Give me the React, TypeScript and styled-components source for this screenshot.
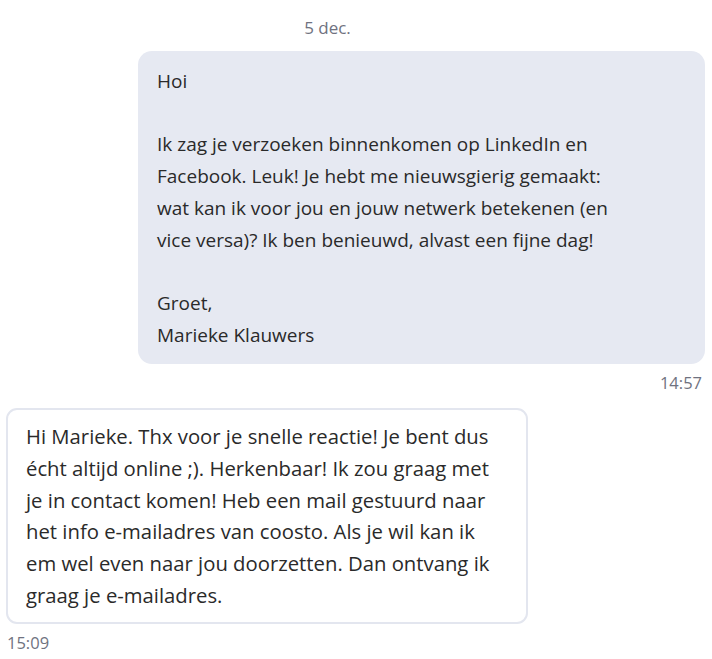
import React from 'react';
import styled, { createGlobalStyle } from 'styled-components';

const GlobalStyle = createGlobalStyle`
  html, body {
    margin: 0;
    padding: 0;
    background: #ffffff;
  }
  body {
    font-family: "Open Sans", "Noto Sans", sans-serif;
    color: #2a2a2a;
  }
`;

const Thread = styled.div`
  display: flex;
  flex-direction: column;
  width: 712px;
  padding: 0 7px 0 6px;
  box-sizing: border-box;
`;

const DateRow = styled.div`
  display: flex;
  justify-content: center;
  padding: 16px 56px 0 0;
  height: 36px;
  box-sizing: border-box;
  font-size: 17px;
  color: #6f7280;
`;

const Bubble = styled.div<{ $own?: boolean }>`
  align-self: ${p => (p.$own ? 'flex-end' : 'flex-start')};
  width: ${p => (p.$own ? '567px' : '522px')};
  box-sizing: border-box;
  margin-top: ${p => (p.$own ? '15px' : '14px')};
  padding: ${p => (p.$own ? '15px 19px 13px' : '11px 18px 10px')};
  border-radius: ${p => (p.$own ? '14px' : '11px')};
  background: ${p => (p.$own ? '#e6e9f2' : '#ffffff')};
  border: ${p => (p.$own ? 'none' : '2px solid #e3e6ef')};
  font-size: ${p => (p.$own ? '19px' : '20.3px')};
  line-height: 31.7px;
  white-space: nowrap;
`;

const Time = styled.div<{ $own?: boolean }>`
  align-self: ${p => (p.$own ? 'flex-end' : 'flex-start')};
  margin: 7px ${p => (p.$own ? '3px' : '1px')} 0;
  font-size: 16.5px;
  color: #6f7280;
`;

const ownLines = [
  'Hoi',
  '',
  'Ik zag je verzoeken binnenkomen op LinkedIn en',
  'Facebook. Leuk! Je hebt me nieuwsgierig gemaakt:',
  'wat kan ik voor jou en jouw netwerk betekenen (en',
  'vice versa)? Ik ben benieuwd, alvast een fijne dag!',
  '',
  'Groet,',
  'Marieke Klauwers',
];

const replyLines = [
  'Hi Marieke. Thx voor je snelle reactie! Je bent dus',
  'écht altijd online ;). Herkenbaar! Ik zou graag met',
  'je in contact komen! Heb een mail gestuurd naar',
  'het info e-mailadres van coosto. Als je wil kan ik',
  'em wel even naar jou doorzetten. Dan ontvang ik',
  'graag je e-mailadres.',
];

const Line = styled.div`
  min-height: 31.7px;
`;

export default function App() {
  return (
    <>
      <GlobalStyle />
      <Thread>
        <DateRow>5 dec.</DateRow>
        <Bubble $own>
          {ownLines.map((l, i) => (
            <Line key={i}>{l}</Line>
          ))}
        </Bubble>
        <Time $own>14:57</Time>
        <Bubble>
          {replyLines.map((l, i) => (
            <Line key={i}>{l}</Line>
          ))}
        </Bubble>
        <Time>15:09</Time>
      </Thread>
    </>
  );
}
